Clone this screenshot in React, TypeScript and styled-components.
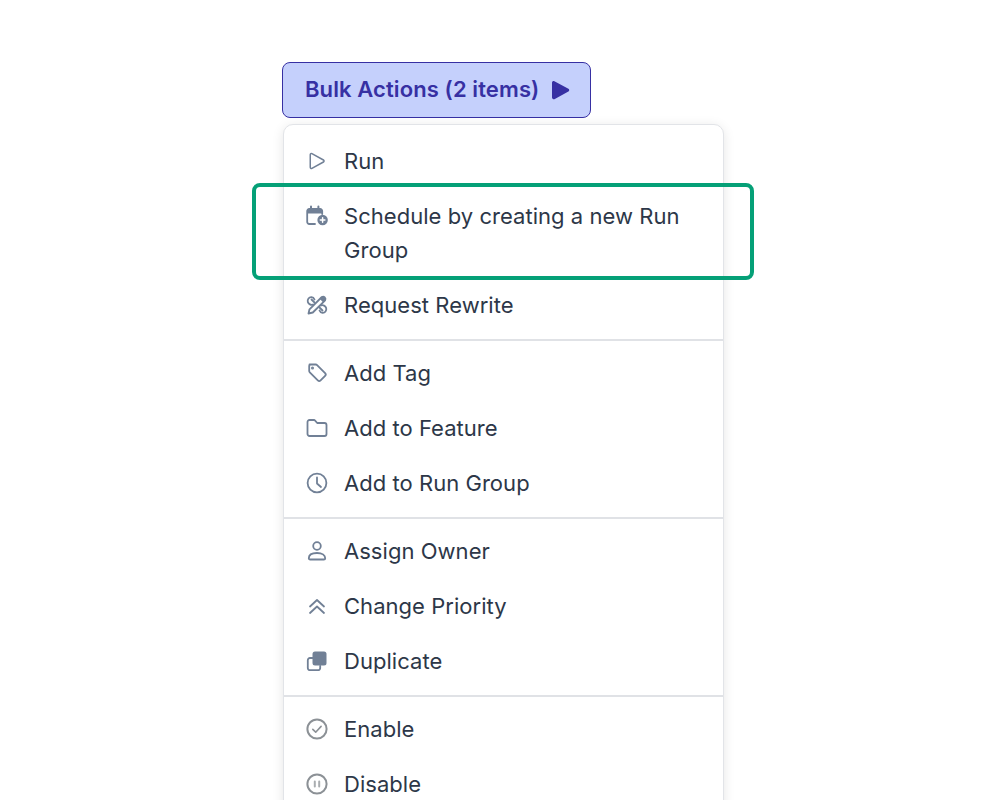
import React from "react"
import styled, { createGlobalStyle } from "styled-components"
import { HiOutlinePlay } from "react-icons/hi2"

const GlobalStyle = createGlobalStyle`
  html, body {
    margin: 0;
    height: 800px;
    overflow: hidden;
    background: #ffffff;
    font-family: Inter, "Liberation Sans", sans-serif;
  }
`

const Glyph: React.FC<{ children: React.ReactNode }> = ({ children }) => (
  <svg width="24" height="24" viewBox="0 0 24 24" fill="none" stroke="currentColor" strokeWidth="1.8" strokeLinecap="round" strokeLinejoin="round">
    {children}
  </svg>
)

const CalendarPlus = () => (
  <Glyph>
    <path d="M10 20H4.2a2 2 0 0 1-2-2V7a2 2 0 0 1 2-2h11a2 2 0 0 1 2 2v3" />
    <path fill="currentColor" stroke="none" d="M2.2 7a2 2 0 0 1 2-2h11a2 2 0 0 1 2 2v2.6H2.2z" />
    <path d="M6 2.4v3M13.4 2.4v3" strokeWidth="2" />
    <circle cx="17.6" cy="16" r="5.2" fill="currentColor" stroke="none" />
    <path d="M17.6 13.7v4.6M15.3 16h4.6" stroke="#ffffff" strokeWidth="1.5" />
  </Glyph>
)

const PencilRuler = () => (
  <Glyph>
    <path d="M3.5 20.5l1-4.2L16.8 4a2.4 2.4 0 0 1 3.3 3.3L7.8 19.5z" />
    <path fill="currentColor" stroke="none" d="M14.8 6L16.8 4a2.4 2.4 0 0 1 3.3 3.3l-2 2z" />
    <path d="M9.5 9.5l-3-3M8 11.5c-2 1-4.5-.5-5.2-2.6C2.2 6.5 4 4 6.5 4.2c1.500.1 2.500 1 3 2.300" />
    <path d="M14.5 14.5l3 3M16 12.5c2-1 4.500.5 5.200 2.600.6 2.400-1.200 4.900-3.700 4.700-1.500-.1-2.500-1-3-2.300" />
  </Glyph>
)

const TagIcon = () => (
  <Glyph>
    <path d="M4.5 3.5h6.2a2 2 0 0 1 1.400.6l8 8a2 2 0 0 1 0 2.800l-4.500 4.500a2 2 0 0 1-2.800 0l-8-8a2 2 0 0 1-.6-1.400V5a1.500 1.500 0 0 1 1.500-1.500z" />
    <circle cx="7.5" cy="7" r="0.6" fill="currentColor" />
  </Glyph>
)

const FolderIcon = () => (
  <Glyph>
    <path d="M2.5 6a2 2 0 0 1 2-2h4.600a1 1 0 0 1 .8.4L12.200 7h7.300a2 2 0 0 1 2 2v9a2 2 0 0 1-2 2h-15a2 2 0 0 1-2-2z" />
  </Glyph>
)

const ClockIcon = () => (
  <Glyph>
    <circle cx="12" cy="12" r="9.4" />
    <path d="M12 6.5v6l4 3.5" />
  </Glyph>
)

const UserIcon = () => (
  <Glyph>
    <circle cx="12" cy="7" r="3.8" />
    <path d="M3.8 19.2c0-3.200 3-5.200 8.200-5.200s8.200 2 8.200 5.200c0 .8-.6 1.300-1.300 1.300H5.100c-.7 0-1.300-.5-1.300-1.300z" />
  </Glyph>
)

const ChevronsUp = () => (
  <Glyph>
    <path d="M5 12.5l7-6.500 7 6.500M5 19l7-6.500 7 6.500" />
  </Glyph>
)

const DuplicateIcon = () => (
  <Glyph>
    <path d="M7.5 9H5a2.200 2.200 0 0 0-2.200 2.200V19A2.200 2.200 0 0 0 5 21.200h8a2.200 2.200 0 0 0 2.200-2.200v-2.200" />
    <rect x="7.5" y="2.5" width="14" height="14" rx="2.5" fill="currentColor" stroke="none" />
  </Glyph>
)

const CheckIcon = () => (
  <Glyph>
    <circle cx="12" cy="12" r="9.6" strokeWidth="2" />
    <path d="M7.8 12.4l2.900 2.800 5.400-5.800" strokeWidth="1.6" />
  </Glyph>
)

const PauseIcon = () => (
  <Glyph>
    <circle cx="12" cy="12" r="9.6" strokeWidth="2" />
    <path d="M9.8 9.5v5M14.2 9.5v5" strokeWidth="2" opacity="0.75" />
  </Glyph>
)

const groups: { label: string; icon: React.ReactNode; highlight?: boolean; muted?: boolean }[][] = [
  [
    { label: "Run", icon: <HiOutlinePlay /> },
    { label: "Schedule by creating a new Run Group", icon: <CalendarPlus />, highlight: true },
    { label: "Request Rewrite", icon: <PencilRuler /> },
  ],
  [
    { label: "Add Tag", icon: <TagIcon /> },
    { label: "Add to Feature", icon: <FolderIcon /> },
    { label: "Add to Run Group", icon: <ClockIcon /> },
  ],
  [
    { label: "Assign Owner", icon: <UserIcon /> },
    { label: "Change Priority", icon: <ChevronsUp /> },
    { label: "Duplicate", icon: <DuplicateIcon /> },
  ],
  [
    { label: "Enable", icon: <CheckIcon />, muted: true },
    { label: "Disable", icon: <PauseIcon />, muted: true },
  ],
]

const App: React.FC = () => {
  return (
    <Page>
      <GlobalStyle />
      <BulkButton>
        Bulk Actions (2 items)
        <svg width="22" height="22" viewBox="0 0 22 22" fill="currentColor">
          <path d="M3 3.6c0-1.200 1.300-2 2.400-1.400l14 7.600c1.100.6 1.100 2.200 0 2.800l-14 7.600C4.300 20.400 3 19.600 3 18.400z" />
        </svg>
      </BulkButton>
      <Menu>
        {groups.map((group, i) => (
          <Group key={i}>
            {group.map((item) => (
              <Item key={item.label} $highlight={item.highlight}>
                <IconSlot $muted={item.muted}>{item.icon}</IconSlot>
                <Label>{item.label}</Label>
              </Item>
            ))}
          </Group>
        ))}
      </Menu>
    </Page>
  )
}

export default App

const Page = styled.div`
  width: 1008px;
  height: 800px;
  overflow: hidden;
  padding: 62px 0 0 282px;
  box-sizing: border-box;
  display: flex;
  flex-direction: column;
  align-items: flex-start;
`

const BulkButton = styled.div`
  width: 309px;
  height: 56px;
  flex-shrink: 0;
  box-sizing: border-box;
  display: flex;
  align-items: center;
  gap: 10px;
  padding: 0 0 2px 22px;
  background-color: #c5d0fc;
  border: 1px solid #3730a3;
  border-radius: 8px;
  color: #3730a3;
  font-size: 22px;
  font-weight: 600;
  letter-spacing: 0.1px;

  svg {
    margin-top: 2px;
  }
`

const Menu = styled.div`
  width: 441px;
  margin: 6px 0 0 1px;
  box-sizing: border-box;
  flex-shrink: 0;
  background-color: #ffffff;
  border: 1px solid #e2e4e8;
  border-radius: 10px;
  box-shadow: 0 2px 12px rgba(0, 0, 0, 0.1);
`

const Group = styled.div`
  padding: 4px 0 7px;
  border-bottom: 2px solid #e0e2e6;

  &:first-child {
    padding-top: 8px;
  }
  &:last-child {
    border-bottom: none;
  }
`

const Item = styled.div<{ $highlight?: boolean }>`
  position: relative;
  display: flex;
  align-items: flex-start;
  gap: 15px;
  padding: 10.5px 40px 10.5px 21px;

  ${(p) =>
    p.$highlight &&
    `
    &::after {
      content: "";
      position: absolute;
      left: -32px;
      right: -31px;
      top: -5px;
      bottom: -3px;
      border: 4px solid #05a077;
      border-radius: 8px;
    }
  `}
`

const IconSlot = styled.span<{ $muted?: boolean }>`
  width: 24px;
  height: 24px;
  margin-top: 5px;
  flex-shrink: 0;
  color: ${(p) => (p.$muted ? "#8c9196" : "#718096")};
  font-size: 24px;
  display: flex;
`

const Label = styled.span`
  font-size: 22px;
  line-height: 34px;
  letter-spacing: 0.04px;
  color: #2d3748;
`
